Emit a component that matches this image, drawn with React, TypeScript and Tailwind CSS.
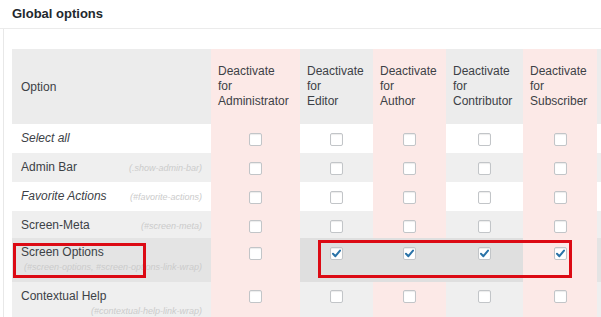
type Row = {
  name: string;
  hint?: string;
  italic?: boolean;
  twoLine?: boolean;
  striped: boolean;
  height: string;
  checked?: boolean;
};

const rows: Row[] = [
  { name: "Select all", italic: true, striped: false, height: "h-[29px]" },
  { name: "Admin Bar", hint: "(.show-admin-bar)", striped: true, height: "h-[29px]" },
  { name: "Favorite Actions", hint: "(#favorite-actions)", italic: true, striped: false, height: "h-[29px]" },
  { name: "Screen-Meta", hint: "(#screen-meta)", striped: true, height: "h-[27px]" },
  {
    name: "Screen Options",
    hint: "(#screen-options, #screen-options-link-wrap)",
    twoLine: true,
    striped: false,
    height: "h-[44px]",
    checked: true,
  },
  {
    name: "Contextual Help",
    hint: "(#contextual-help-link-wrap)",
    twoLine: true,
    striped: true,
    height: "h-[44px]",
  },
];

// last column is cut off by the window, only its background shows
const roles = ["Administrator", "Editor", "Author", "Contributor", "Subscriber", ""];

const Checkbox = ({ checked }: { checked?: boolean }) => (
  <span className="w-[13px] h-[13px] border border-[#c2c5c8] bg-white rounded-[2px] shadow-[inset_0_1px_1px_rgba(0,0,0,0.08)] flex items-center justify-center">
    {checked && (
      <svg width="11" height="11" viewBox="0 0 11 11">
        <path d="M2 5.8 L4.4 8.2 L9 2.6" fill="none" stroke="#2a73a8" strokeWidth="2" strokeLinecap="round" strokeLinejoin="round" />
      </svg>
    )}
  </span>
);

const App = () => {
  return (
    <div className="relative w-[601px] h-[317px] overflow-hidden bg-white font-['Liberation_Sans',Arial,sans-serif] text-[#3c4146]">
      <div className="h-[29px] border-b border-[#ebebeb] px-[12px] flex items-center text-[13px] font-bold text-[#23282d]">
        Global options
      </div>
      <div className="ml-[3px] border-l border-[#e8e8e8] pl-[8px] pt-[20px] h-full">
        <div className="grid grid-cols-[199px_89px_73px_73px_77px_74px_80px] w-[665px] text-[12px]">
          {/* header row */}
          <div className="h-[75px] bg-[#ececec] flex items-center pl-[9px]">Option</div>
          {roles.map((role, i) => (
            <div
              key={"h" + i}
              className={`h-[75px] flex items-center pl-[7px] leading-[15px] ${i % 2 === 0 ? "bg-[#fce9e7]" : "bg-[#ececec]"}`}
            >
              {role && (
                <span>
                  Deactivate
                  <br />
                  for
                  <br />
                  {role}
                </span>
              )}
            </div>
          ))}

          {rows.map((row) => {
            const base = row.striped ? "bg-[#efefef]" : "bg-white";
            const optBg = row.checked ? "bg-[#e4e4e4]" : base;
            return [
              <div key={row.name} className={`${row.height} ${optBg} pl-[9px] pr-[9px] pt-[8px]`}>
                {row.twoLine ? (
                  <div className="flex flex-col">
                    <span className={`leading-[13px] ${row.italic ? "italic" : ""}`}>{row.name}</span>
                    <span className="text-right italic text-[9px] leading-[16px] text-[#cbcbcb] whitespace-nowrap">
                      {row.hint}
                    </span>
                  </div>
                ) : (
                  <div className="flex items-baseline justify-between">
                    <span className={`leading-[13px] ${row.italic ? "italic" : ""}`}>{row.name}</span>
                    {row.hint && (
                      <span className="italic text-[9px] leading-[13px] text-[#cbcbcb]">{row.hint}</span>
                    )}
                  </div>
                )}
              </div>,
              ...roles.map((role, i) => {
                let bg = i % 2 === 0 ? "bg-[#fce9e7]" : base;
                if (row.checked && i >= 1 && i <= 3) bg = "bg-[#dfdfdf]";
                if (row.checked && i === 5) bg = "bg-[#e4e4e4]";
                return (
                  <div
                    key={row.name + i}
                    className={`${row.height} ${bg} flex justify-center ${row.twoLine && !row.checked ? "pt-[8px]" : "pt-[9px]"}`}
                  >
                    {role && <Checkbox checked={row.checked && i >= 1 && i <= 4} />}
                  </div>
                );
              }),
            ];
          })}
        </div>
      </div>

      {/* annotation boxes */}
      <div className="absolute left-[13px] top-[243px] w-[133px] h-[35px] border-[3px] border-[#dc0a14]" />
      <div className="absolute left-[318px] top-[240px] w-[254px] h-[38px] border-[3px] border-[#dc0a14]" />
    </div>
  );
};

export default App;
